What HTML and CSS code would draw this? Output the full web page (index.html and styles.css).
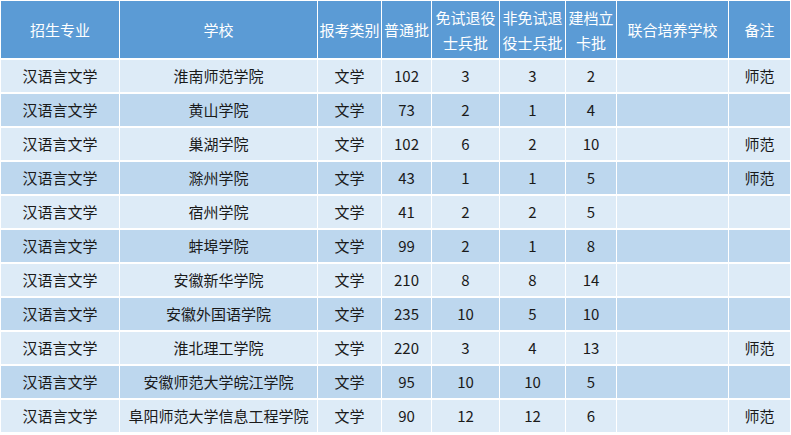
FILE: index.html
```html
<!DOCTYPE html>
<html lang="zh-CN">
<head>
<meta charset="utf-8">
<title>汉语言文学招生计划</title>
<link rel="stylesheet" href="styles.css">
</head>
<body>
<table class="plan">
  <colgroup>
    <col class="c1"><col class="c2"><col class="c3"><col class="c4"><col class="c5"><col class="c6"><col class="c7"><col class="c8"><col class="c9">
  </colgroup>
  <thead>
    <tr>
      <th>招生专业</th>
      <th>学校</th>
      <th>报考类别</th>
      <th>普通批</th>
      <th>免试退役<br>士兵批</th>
      <th>非免试退<br>役士兵批</th>
      <th>建档立<br>卡批</th>
      <th>联合培养学校</th>
      <th>备注</th>
    </tr>
  </thead>
  <tbody>
    <tr class="odd"><td>汉语言文学</td><td>淮南师范学院</td><td>文学</td><td>102</td><td>3</td><td>3</td><td>2</td><td></td><td>师范</td></tr>
    <tr class="even"><td>汉语言文学</td><td>黄山学院</td><td>文学</td><td>73</td><td>2</td><td>1</td><td>4</td><td></td><td></td></tr>
    <tr class="odd"><td>汉语言文学</td><td>巢湖学院</td><td>文学</td><td>102</td><td>6</td><td>2</td><td>10</td><td></td><td>师范</td></tr>
    <tr class="even"><td>汉语言文学</td><td>滁州学院</td><td>文学</td><td>43</td><td>1</td><td>1</td><td>5</td><td></td><td>师范</td></tr>
    <tr class="odd"><td>汉语言文学</td><td>宿州学院</td><td>文学</td><td>41</td><td>2</td><td>2</td><td>5</td><td></td><td></td></tr>
    <tr class="even"><td>汉语言文学</td><td>蚌埠学院</td><td>文学</td><td>99</td><td>2</td><td>1</td><td>8</td><td></td><td></td></tr>
    <tr class="odd"><td>汉语言文学</td><td>安徽新华学院</td><td>文学</td><td>210</td><td>8</td><td>8</td><td>14</td><td></td><td></td></tr>
    <tr class="even"><td>汉语言文学</td><td>安徽外国语学院</td><td>文学</td><td>235</td><td>10</td><td>5</td><td>10</td><td></td><td></td></tr>
    <tr class="odd"><td>汉语言文学</td><td>淮北理工学院</td><td>文学</td><td>220</td><td>3</td><td>4</td><td>13</td><td></td><td>师范</td></tr>
    <tr class="even"><td>汉语言文学</td><td>安徽师范大学皖江学院</td><td>文学</td><td>95</td><td>10</td><td>10</td><td>5</td><td></td><td></td></tr>
    <tr class="odd"><td>汉语言文学</td><td>阜阳师范大学信息工程学院</td><td>文学</td><td>90</td><td>12</td><td>12</td><td>6</td><td></td><td>师范</td></tr>
  </tbody>
</table>
</body>
</html>
```

FILE: styles.css
```css
html, body {
  margin: 0;
  padding: 0;
  background: #ffffff;
}

body {
  font-family: "Noto Sans CJK SC", "Noto Sans", sans-serif;
  font-size: 15px;
  color: #1a1a1a;
}

.plan {
  table-layout: fixed;
  border-collapse: separate;
  border-spacing: 1px 2px;
  margin-top: -1px;
  width: 790px;
}

.c1 { width: 118px; }
.c2 { width: 197px; }
.c3 { width: 63px; }
.c4 { width: 49px; }
.c5 { width: 67px; }
.c6 { width: 65px; }
.c7 { width: 50px; }
.c8 { width: 111px; }
.c9 { width: 61px; }

.plan th,
.plan td {
  padding: 0;
  text-align: center;
  vertical-align: middle;
  white-space: nowrap;
  overflow: hidden;
}

.plan th {
  height: 57px;
  background: #5b9bd5;
  color: #ffffff;
  font-weight: normal;
  line-height: 25px;
}

.plan td {
  height: 32px;
  line-height: 32px;
}

.plan tr.odd td {
  background: #ddebf7;
}

.plan tr.even td {
  background: #bdd7ee;
}
```
